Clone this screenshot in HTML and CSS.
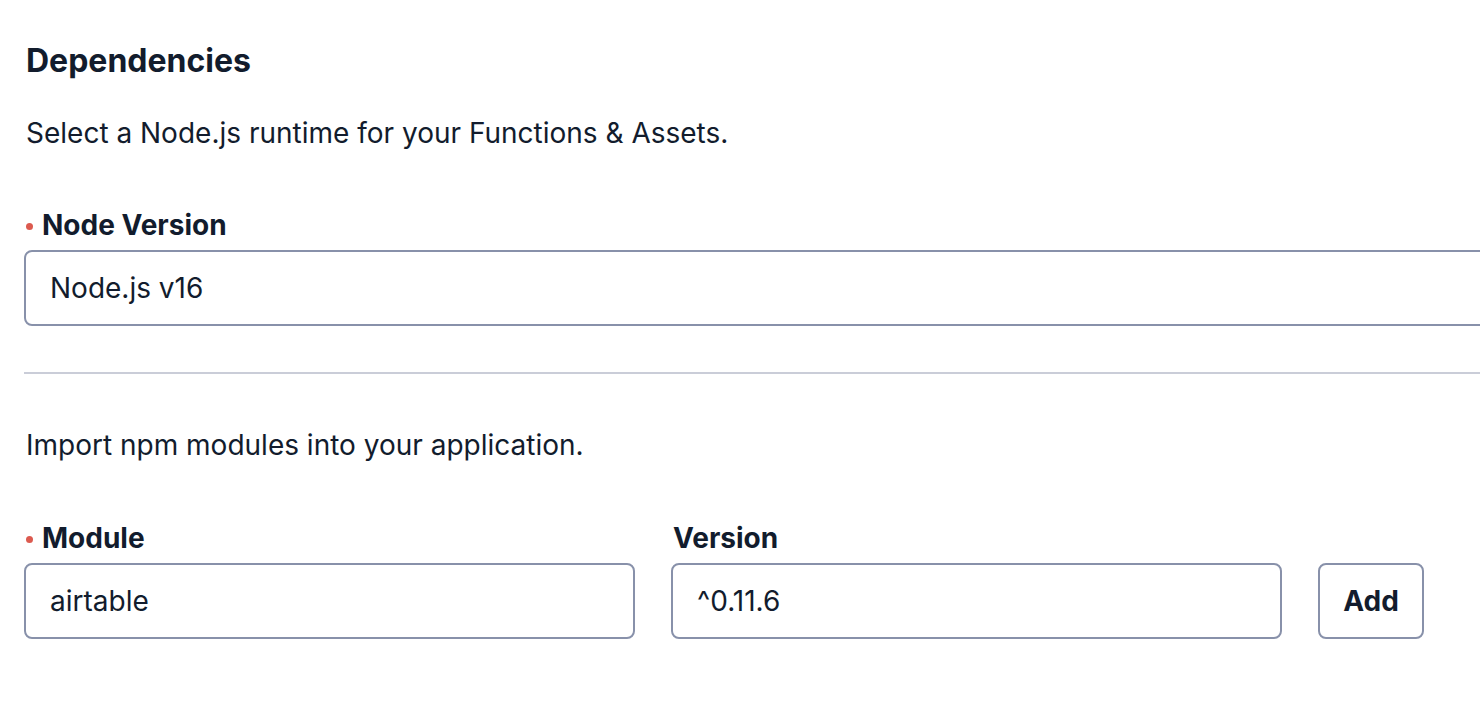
FILE: index.html
```html
<!DOCTYPE html>
<html lang="en">
<head>
<meta charset="utf-8">
<title>Dependencies</title>
<link rel="stylesheet" href="styles.css">
</head>
<body>
<main class="page">
  <h2 class="heading">Dependencies</h2>
  <p class="text">Select a Node.js runtime for your Functions &amp; Assets.</p>
  <div class="field wide">
    <label class="label"><span class="req"></span>Node Version</label>
    <div class="input">Node.js v16</div>
  </div>
  <hr class="divider">
  <p class="text second">Import npm modules into your application.</p>
  <div class="row">
    <div class="field col">
      <label class="label"><span class="req"></span>Module</label>
      <div class="input">airtable</div>
    </div>
    <div class="field col">
      <label class="label plain">Version</label>
      <div class="input">^0.11.6</div>
    </div>
    <button class="btn" type="button">Add</button>
  </div>
</main>
</body>
</html>
```
FILE: styles.css
```css
html, body {
  margin: 0;
  padding: 0;
  background: #ffffff;
  overflow: hidden;
}
body {
  font-family: Inter, "Noto Sans", "Liberation Sans", sans-serif;
  color: #121c2d;
  font-size: 28px;
  line-height: 40px;
}
.page {
  padding: 37px 0 0 24px;
  width: 1520px;
}
.heading {
  margin: 0;
  padding-left: 2px;
  font-size: 32px;
  line-height: 48px;
  font-weight: 700;
}
.text {
  margin: 28px 0 0 0;
  padding-left: 2px;
}
.text.second {
  margin-top: 51px;
}
.field {
  display: flex;
  flex-direction: column;
}
.wide {
  margin-top: 52px;
}
.label {
  display: flex;
  align-items: center;
  font-weight: 700;
  line-height: 40px;
  margin-bottom: 5px;
}
.label.plain {
  padding-left: 2px;
}
.req {
  width: 7px;
  height: 7px;
  border-radius: 50%;
  background: #dc5a4f;
  margin: 2px 9px 0 2px;
}
.input {
  box-sizing: border-box;
  height: 76px;
  border: 2px solid #8891aa;
  border-radius: 8px;
  padding: 0 24px;
  display: flex;
  align-items: center;
}
.divider {
  border: 0;
  height: 2px;
  background: #cacdd8;
  margin: 46px 0 0 0;
}
.row {
  display: flex;
  align-items: flex-end;
  margin-top: 53px;
}
.col {
  width: 611px;
  margin-right: 36px;
}
.btn {
  box-sizing: border-box;
  width: 106px;
  height: 76px;
  border: 2px solid #8891aa;
  border-radius: 8px;
  background: #fff;
  font-family: inherit;
  font-size: 28px;
  font-weight: 700;
  color: #121c2d;
  padding: 0;
}
```
